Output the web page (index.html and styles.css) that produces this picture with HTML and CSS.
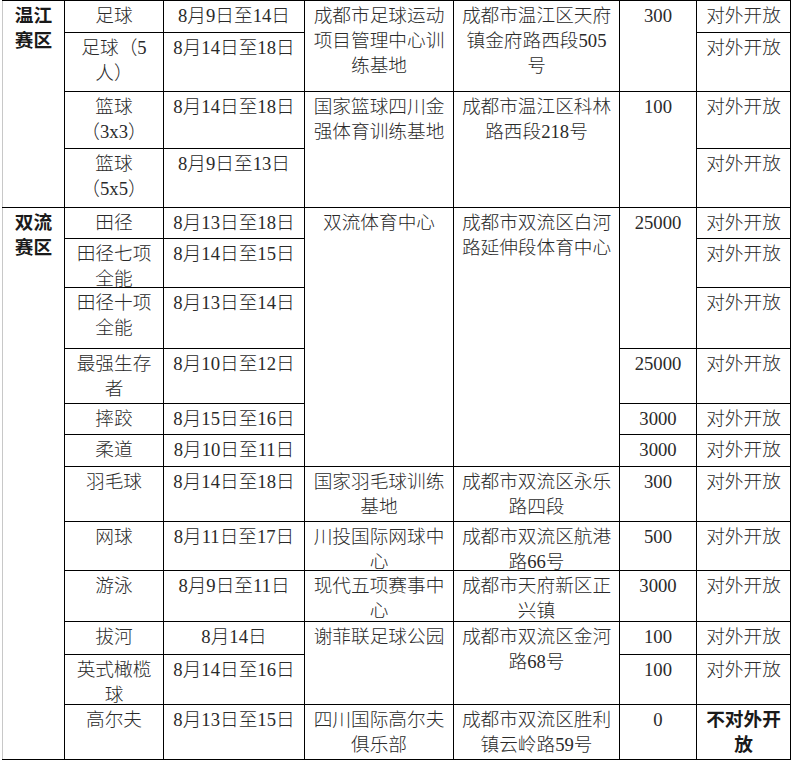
FILE: index.html
```html
<!DOCTYPE html>
<html lang="zh-CN">
<head>
<meta charset="utf-8">
<title>赛区场馆</title>
<link rel="stylesheet" href="styles.css">
</head>
<body>
<table class="venues">
  <colgroup>
    <col class="c-zone"><col class="c-sport"><col class="c-date"><col class="c-venue"><col class="c-addr"><col class="c-cap"><col class="c-open">
  </colgroup>
  <tbody>
    <tr class="r1">
      <td class="zone" rowspan="4"><div class="tx">温江<br>赛区</div></td>
      <td><div class="tx">足球</div></td>
      <td><div class="tx">8月9日至14日</div></td>
      <td rowspan="2"><div class="tx">成都市足球运动<br>项目管理中心训<br>练基地</div></td>
      <td rowspan="2"><div class="tx">成都市温江区天府<br>镇金府路西段505<br>号</div></td>
      <td rowspan="2"><div class="tx">300</div></td>
      <td><div class="tx">对外开放</div></td>
    </tr>
    <tr class="r2">
      <td><div class="tx">足球（5<br>人）</div></td>
      <td><div class="tx">8月14日至18日</div></td>
      <td><div class="tx">对外开放</div></td>
    </tr>
    <tr class="r3">
      <td><div class="tx">篮球<br>（3x3）</div></td>
      <td><div class="tx">8月14日至18日</div></td>
      <td rowspan="2"><div class="tx">国家篮球四川金<br>强体育训练基地</div></td>
      <td rowspan="2"><div class="tx">成都市温江区科林<br>路西段218号</div></td>
      <td rowspan="2"><div class="tx">100</div></td>
      <td><div class="tx">对外开放</div></td>
    </tr>
    <tr class="r4">
      <td><div class="tx">篮球<br>（5x5）</div></td>
      <td><div class="tx">8月9日至13日</div></td>
      <td><div class="tx">对外开放</div></td>
    </tr>
    <tr class="r5">
      <td class="zone" rowspan="12"><div class="tx">双流<br>赛区</div></td>
      <td><div class="tx">田径</div></td>
      <td><div class="tx">8月13日至18日</div></td>
      <td rowspan="6"><div class="tx">双流体育中心</div></td>
      <td rowspan="6"><div class="tx">成都市双流区白河<br>路延伸段体育中心</div></td>
      <td rowspan="3"><div class="tx">25000</div></td>
      <td><div class="tx">对外开放</div></td>
    </tr>
    <tr class="r6">
      <td><div class="tx">田径七项<br>全能</div></td>
      <td><div class="tx">8月14日至15日</div></td>
      <td><div class="tx">对外开放</div></td>
    </tr>
    <tr class="r7">
      <td><div class="tx">田径十项<br>全能</div></td>
      <td><div class="tx">8月13日至14日</div></td>
      <td><div class="tx">对外开放</div></td>
    </tr>
    <tr class="r8">
      <td><div class="tx">最强生存<br>者</div></td>
      <td><div class="tx">8月10日至12日</div></td>
      <td><div class="tx">25000</div></td>
      <td><div class="tx">对外开放</div></td>
    </tr>
    <tr class="r9">
      <td><div class="tx">摔跤</div></td>
      <td><div class="tx">8月15日至16日</div></td>
      <td><div class="tx">3000</div></td>
      <td><div class="tx">对外开放</div></td>
    </tr>
    <tr class="r10">
      <td><div class="tx">柔道</div></td>
      <td><div class="tx">8月10日至11日</div></td>
      <td><div class="tx">3000</div></td>
      <td><div class="tx">对外开放</div></td>
    </tr>
    <tr class="r11">
      <td><div class="tx">羽毛球</div></td>
      <td><div class="tx">8月14日至18日</div></td>
      <td><div class="tx">国家羽毛球训练<br>基地</div></td>
      <td><div class="tx">成都市双流区永乐<br>路四段</div></td>
      <td><div class="tx">300</div></td>
      <td><div class="tx">对外开放</div></td>
    </tr>
    <tr class="r12">
      <td><div class="tx">网球</div></td>
      <td><div class="tx">8月11日至17日</div></td>
      <td><div class="tx">川投国际网球中<br>心</div></td>
      <td><div class="tx">成都市双流区航港<br>路66号</div></td>
      <td><div class="tx">500</div></td>
      <td><div class="tx">对外开放</div></td>
    </tr>
    <tr class="r13">
      <td><div class="tx">游泳</div></td>
      <td><div class="tx">8月9日至11日</div></td>
      <td><div class="tx">现代五项赛事中<br>心</div></td>
      <td><div class="tx">成都市天府新区正<br>兴镇</div></td>
      <td><div class="tx">3000</div></td>
      <td><div class="tx">对外开放</div></td>
    </tr>
    <tr class="r14">
      <td><div class="tx">拔河</div></td>
      <td><div class="tx">8月14日</div></td>
      <td rowspan="2"><div class="tx">谢菲联足球公园</div></td>
      <td rowspan="2"><div class="tx">成都市双流区金河<br>路68号</div></td>
      <td><div class="tx">100</div></td>
      <td><div class="tx">对外开放</div></td>
    </tr>
    <tr class="r15">
      <td><div class="tx">英式橄榄<br>球</div></td>
      <td><div class="tx">8月14日至16日</div></td>
      <td><div class="tx">100</div></td>
      <td><div class="tx">对外开放</div></td>
    </tr>
    <tr class="r16">
      <td><div class="tx">高尔夫</div></td>
      <td><div class="tx">8月13日至15日</div></td>
      <td><div class="tx">四川国际高尔夫<br>俱乐部</div></td>
      <td><div class="tx">成都市双流区胜利<br>镇云岭路59号</div></td>
      <td><div class="tx">0</div></td>
      <td class="closed"><div class="tx">不对外开<br>放</div></td>
    </tr>
  </tbody>
</table>
</body>
</html>
```

FILE: styles.css
```css
html, body {
  margin: 0;
  padding: 0;
  background: #ffffff;
}

.venues {
  margin-left: 2px;
  border-collapse: collapse;
  table-layout: fixed;
  width: 789px;
  font-family: "Liberation Serif", "Noto Sans CJK SC", serif;
  font-size: 18.67px;
  font-weight: 300;
  line-height: 25px;
  color: #2a2a2a;
}

.c-zone { width: 62px; }
.c-sport { width: 99px; }
.c-date { width: 141px; }
.c-venue { width: 149px; }
.c-addr { width: 166px; }
.c-cap { width: 77px; }
.c-open { width: 94px; }

.venues td {
  border: 1px solid #000000;
  padding: 2px 0 0 0;
  vertical-align: top;
  text-align: center;
  white-space: nowrap;
  overflow: visible;
}

.venues .tx {
  margin-bottom: -12px;
}

.venues td.zone {
  border-left-color: #c8c8c8;
  font-weight: bold;
  color: #1a1a1a;
}

.venues td.closed {
  font-weight: bold;
  color: #1a1a1a;
}

.r1 { height: 32px; }
.r2 { height: 59px; }
.r3 { height: 57px; }
.r4 { height: 59px; }
.r5 { height: 31px; }
.r6 { height: 49px; }
.r7 { height: 61px; }
.r8 { height: 55px; }
.r9 { height: 31px; }
.r10 { height: 32px; }
.r11 { height: 55px; }
.r12 { height: 49px; }
.r13 { height: 51px; }
.r14 { height: 33px; }
.r15 { height: 50px; }
.r16 { height: 55px; }
```
